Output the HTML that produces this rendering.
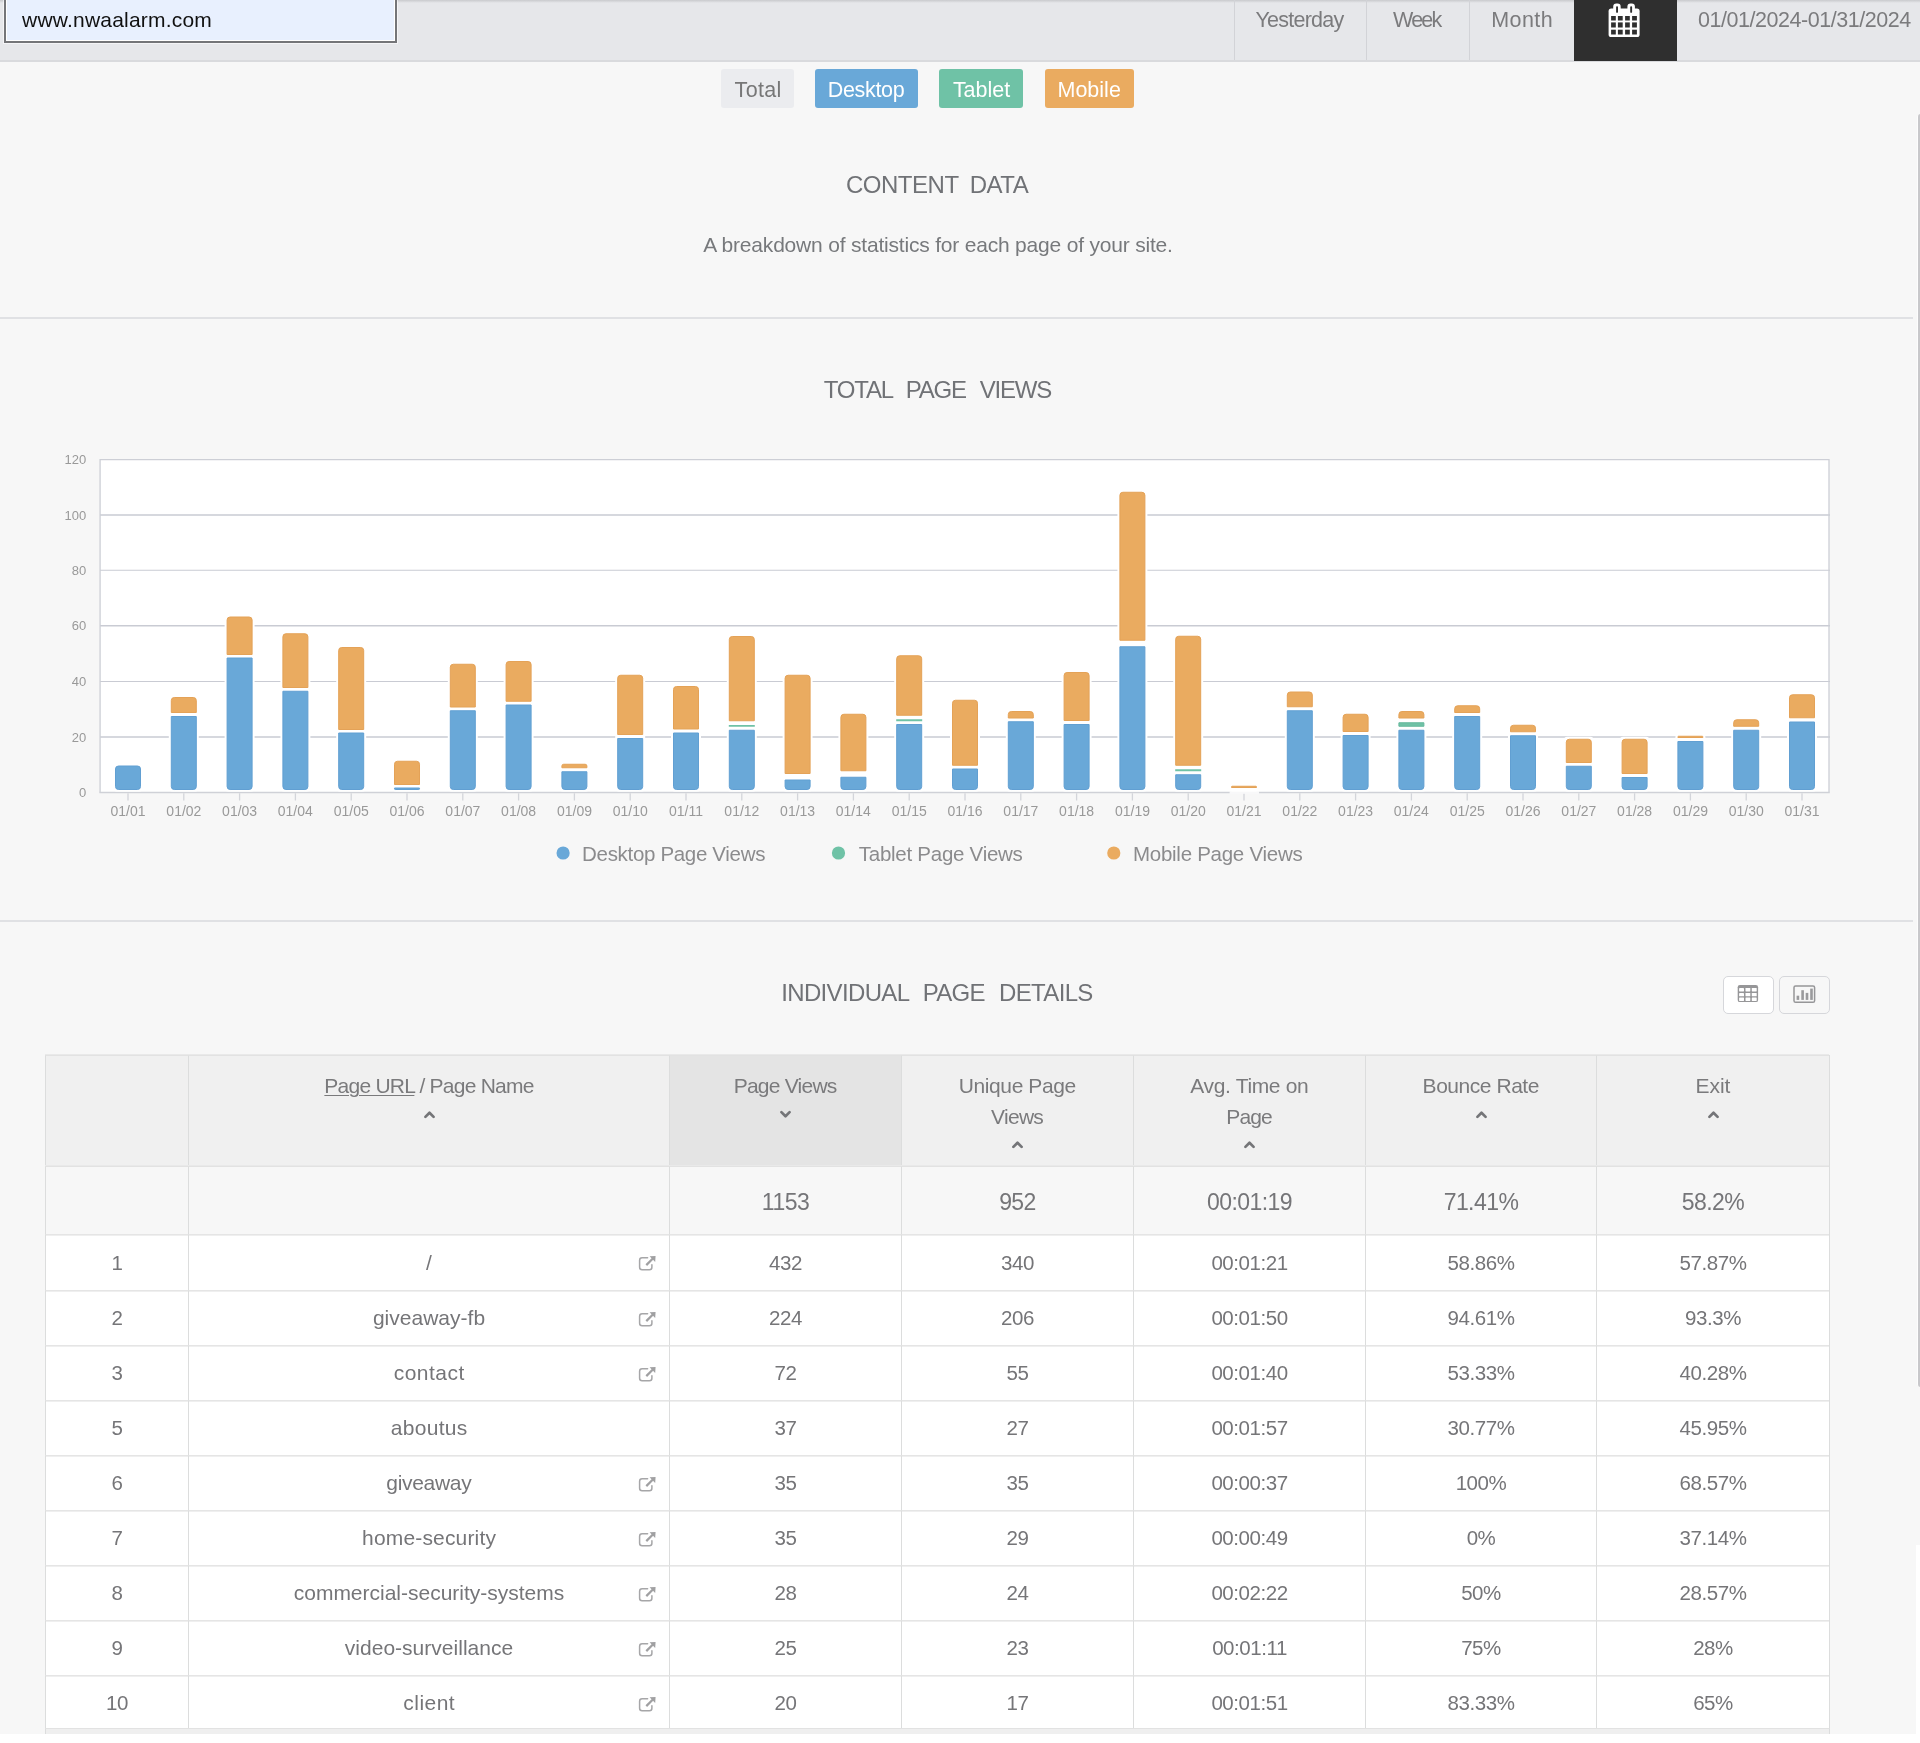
<!DOCTYPE html>
<html lang="en"><head><meta charset="utf-8"><title>Content Data</title>
<style>
*{box-sizing:border-box}
html,body{margin:0;padding:0}
body{width:1920px;height:1743px;background:#fff;font-family:"Liberation Sans",sans-serif;position:relative;overflow:hidden;color:#777}
.t{position:absolute;line-height:1;white-space:nowrap;margin:0;font-weight:400}
.page{position:absolute;left:0;top:0;width:1920px;height:1734px;background:#f7f7f7;will-change:transform}
.topbar{position:absolute;left:0;top:0;width:1920px;height:62px;background:#e6e7ea;border-bottom:2px solid #d9dadd}
.topbar:before{content:"";position:absolute;left:0;top:0;width:100%;height:3px;background:linear-gradient(#c9cacd,#e6e7ea)}
.site{position:absolute;left:4px;top:-3px;width:393px;height:46px;background:#e8f0fe;border:2px solid #747578;box-shadow:inset 0 0 0 1px #fff,0 0 0 1px rgba(255,255,255,.55)}
.nav{position:absolute;top:0;height:60px;border-left:1px solid #d2d3d7}
.nav.cal{background:#2f2f2f;border:0;height:61px}
.dev{position:absolute;top:69px;height:39px;border-radius:3px}
.hr{position:absolute;left:0;width:1913px;height:2px;background:#e0e1e4}
.sb{position:absolute;left:1917px;top:114px;width:3px;height:1273px;background:#c8c8cb;border-left:1px solid #fdfdfd;border-radius:3px 0 0 3px}
.vb{position:absolute;top:976px;width:51px;height:38px;border:1px solid #d6d7db;border-radius:5px}

.vb svg{position:absolute}
table.dt{position:absolute;left:45px;top:1055px;border-collapse:separate;border-spacing:0;table-layout:fixed;width:1785px;border-right:1px solid #dcdddd;color:#757578}
.dt th,.dt td{border-left:1px solid #dcdddd;border-top:1px solid #e2e2e2;padding:0;text-align:center;font-weight:400;position:relative;overflow:hidden;white-space:nowrap}
.dt th{background:#f0f0f0;vertical-align:top;font-size:21px;line-height:31px;padding-top:14px;height:111px;color:#7a7a7c}
.dt th.sorted{background:#e4e4e4}
.dt thead th,.dt thead td{box-shadow:0 -1px 0 #e9e9e9}
.dt tbody td{border-top-color:#e5e5e5;box-shadow:inset 0 1px 0 #efefef}
.dt th u{text-decoration-thickness:1.2px;text-underline-offset:2px}
.dt tr.tot td{background:#f7f7f7;height:68px;font-size:23px;line-height:26px;vertical-align:middle;letter-spacing:-.55px;padding:3px 0 0}
.dt tbody td{background:#fff;height:55px;font-size:20.5px;line-height:24px;vertical-align:middle;letter-spacing:-.45px;padding:0}
.dt tbody tr.r56 td{height:56px;padding:1px 0 0}
.dt tbody tr.r53 td{height:53px;padding:2px 0 0}
.dt tbody td.nm{letter-spacing:0;font-size:21px}
.dt .car{display:block;margin:0 auto;position:relative;top:9px}
.dt .two .car{top:7.5px}
.dt .lk{position:absolute;right:13px;top:50%;margin-top:-7.4px}
.dt tr.r53 .lk{margin-top:-6.4px}
.tfoot{position:absolute;left:45px;top:1728px;width:1785px;height:6px;background:#efefef;border-top:1px solid #e2e2e2;border-left:1px solid #dcdddd;border-right:1px solid #dcdddd}
</style></head>
<body>
<div class="page">
<header class="topbar">
<div class="site"><span class="t" style="left:16.12px;top:10.40px;font-size:21px;color:#111;letter-spacing:0.200px;">www.nwaalarm.com</span></div>
<nav>
<a class="nav" style="left:1234px;width:132px"><span class="t" style="left:20.38px;top:9.80px;font-size:21.5px;color:#7b7b7d;letter-spacing:-0.750px;">Yesterday</span></a>
<a class="nav" style="left:1366px;width:104px"><span class="t" style="left:26.00px;top:9.80px;font-size:21.5px;color:#7b7b7d;letter-spacing:-1.750px;">Week</span></a>
<a class="nav" style="left:1469px;width:105px"><span class="t" style="left:21.25px;top:9.80px;font-size:21.5px;color:#7b7b7d;letter-spacing:0.406px;">Month</span></a>
</nav>
<div class="nav cal" style="left:1574px;width:103px"></div>
<span class="t" style="left:1697.95px;top:9.80px;font-size:21.5px;color:#7b7b7d;letter-spacing:-0.450px;">01/01/2024-01/31/2024</span>
<svg style="position:absolute;left:1604px;top:0" width="40" height="42" viewBox="1604 0 40 42">
<rect x="1608.6" y="8.6" width="31" height="28.5" rx="2.6" fill="#fff"/>
<rect x="1613.2" y="3.6" width="7.5" height="11" rx="3.2" fill="#fff"/>
<rect x="1627.4" y="3.6" width="7.5" height="11" rx="3.2" fill="#fff"/>
<rect x="1616.1" y="6.2" width="1.9" height="6.6" rx=".9" fill="#2f2f2f"/>
<rect x="1630.2" y="6.2" width="1.9" height="6.6" rx=".9" fill="#2f2f2f"/>
<g fill="#2f2f2f"><rect x="1611.1" y="16.0" width="4.7" height="4.5"/><rect x="1617.9" y="16.0" width="4.8" height="4.5"/><rect x="1625.1" y="16.0" width="4.7" height="4.5"/><rect x="1632.1" y="16.0" width="4.8" height="4.5"/><rect x="1611.1" y="22.4" width="4.7" height="5.1"/><rect x="1617.9" y="22.4" width="4.8" height="5.1"/><rect x="1625.1" y="22.4" width="4.7" height="5.1"/><rect x="1632.1" y="22.4" width="4.8" height="5.1"/><rect x="1611.1" y="29.7" width="4.7" height="4.8"/><rect x="1617.9" y="29.7" width="4.8" height="4.8"/><rect x="1625.1" y="29.7" width="4.7" height="4.8"/><rect x="1632.1" y="29.7" width="4.8" height="4.8"/></g></svg>
</header>
<div class="dev" style="left:720.5px;width:73.25px;background:#ebecef"><span class="t" style="left:14.12px;top:10.60px;font-size:21.5px;color:#777;letter-spacing:0.344px;">Total</span></div>
<div class="dev" style="left:815px;width:102.75px;background:#69a8d8"><span class="t" style="left:12.75px;top:10.60px;font-size:21.5px;color:#fff;letter-spacing:-0.333px;">Desktop</span></div>
<div class="dev" style="left:939px;width:84.25px;background:#6fc2a6"><span class="t" style="left:13.88px;top:10.60px;font-size:21.5px;color:#fff;letter-spacing:-0.025px;">Tablet</span></div>
<div class="dev" style="left:1044.5px;width:89.75px;background:#eaab60"><span class="t" style="left:13.00px;top:10.60px;font-size:21.5px;color:#fff;">Mobile</span></div>
<h1 class="t" style="left:845.98px;top:173.30px;font-size:24px;color:#707276;letter-spacing:-0.477px;word-spacing:5.248px">CONTENT DATA</h1>
<p class="t" style="left:703.30px;top:234.40px;font-size:21px;color:#77797c;letter-spacing:-0.196px;">A breakdown of statistics for each page of your site.</p>
<div class="hr" style="top:317px"></div>
<h2 class="t" style="left:823.80px;top:378.00px;font-size:24px;color:#707276;letter-spacing:-1.221px;word-spacing:8.419px">TOTAL PAGE VIEWS</h2>
<div class="hr" style="top:919.5px"></div>
<h2 class="t" style="left:781.27px;top:981.00px;font-size:24px;color:#707276;letter-spacing:-0.662px;word-spacing:8.175px">INDIVIDUAL PAGE DETAILS</h2>
<div class="sb"></div>
<div style="position:absolute;left:1916px;top:1545px;width:4px;height:189px;background:#fff"></div>
<svg class="chart" style="position:absolute;left:0;top:440px" width="1920" height="440" viewBox="0 440 1920 440" font-family="Liberation Sans, sans-serif">
<rect x="100.1" y="459.6" width="1728.9" height="332.9" fill="#fff"/>
<line x1="100" x2="1830" y1="515.0" y2="515.0" stroke="#c9cbd3" stroke-width="1.5"/>
<line x1="100" x2="1830" y1="570.2" y2="570.2" stroke="#c9cbd3" stroke-width="1.1"/>
<line x1="100" x2="1830" y1="625.8" y2="625.8" stroke="#c9cbd3" stroke-width="1.5"/>
<line x1="100" x2="1830" y1="681.5" y2="681.5" stroke="#c9cbd3" stroke-width="1.1"/>
<line x1="100" x2="1830" y1="737.0" y2="737.0" stroke="#c9cbd3" stroke-width="1.5"/>
<path d="M100.1 792.5V459.6H1829V792.5" fill="none" stroke="#cdcfd6" stroke-width="1.3"/>
<line x1="99.4" x2="1829.7" y1="792.5" y2="792.5" stroke="#cfd1d7" stroke-width="1.4"/>
<path d="M128.00 793.2V800.6M183.80 793.2V800.6M239.60 793.2V800.6M295.40 793.2V800.6M351.20 793.2V800.6M407.00 793.2V800.6M462.80 793.2V800.6M518.60 793.2V800.6M574.40 793.2V800.6M630.20 793.2V800.6M686.00 793.2V800.6M741.80 793.2V800.6M797.60 793.2V800.6M853.40 793.2V800.6M909.20 793.2V800.6M965.00 793.2V800.6M1020.80 793.2V800.6M1076.60 793.2V800.6M1132.40 793.2V800.6M1188.20 793.2V800.6M1244.00 793.2V800.6M1299.80 793.2V800.6M1355.60 793.2V800.6M1411.40 793.2V800.6M1467.20 793.2V800.6M1523.00 793.2V800.6M1578.80 793.2V800.6M1634.60 793.2V800.6M1690.40 793.2V800.6M1746.20 793.2V800.6M1802.00 793.2V800.6" stroke="#d3d5da" stroke-width="1.3" fill="none"/>
<rect x="113.00" y="763.50" width="30.0" height="28.10" rx="3.5" fill="#fff"/>
<path d="M115.50 769.00Q115.50 766.00 118.50 766.00L137.50 766.00Q140.50 766.00 140.50 769.00L140.50 786.50Q140.50 789.50 137.50 789.50L118.50 789.50Q115.50 789.50 115.50 786.50Z" fill="#69a8d8" stroke="#619fd2" stroke-width="1"/>
<rect x="168.80" y="695.00" width="30.0" height="96.60" rx="3.5" fill="#fff"/>
<path d="M171.30 700.50Q171.30 697.50 174.30 697.50L193.30 697.50Q196.30 697.50 196.30 700.50L196.30 712.50L171.30 712.50Z" fill="#eaab60" stroke="#e4a257" stroke-width="1"/>
<path d="M171.30 716.50L171.30 716.50L196.30 716.50L196.30 786.50Q196.30 789.50 193.30 789.50L174.30 789.50Q171.30 789.50 171.30 786.50Z" fill="#69a8d8" stroke="#619fd2" stroke-width="1"/>
<rect x="224.60" y="614.50" width="30.0" height="177.10" rx="3.5" fill="#fff"/>
<path d="M227.10 620.00Q227.10 617.00 230.10 617.00L249.10 617.00Q252.10 617.00 252.10 620.00L252.10 654.50L227.10 654.50Z" fill="#eaab60" stroke="#e4a257" stroke-width="1"/>
<path d="M227.10 658.00L227.10 658.00L252.10 658.00L252.10 786.50Q252.10 789.50 249.10 789.50L230.10 789.50Q227.10 789.50 227.10 786.50Z" fill="#69a8d8" stroke="#619fd2" stroke-width="1"/>
<rect x="280.40" y="631.25" width="30.0" height="160.35" rx="3.5" fill="#fff"/>
<path d="M282.90 636.75Q282.90 633.75 285.90 633.75L304.90 633.75Q307.90 633.75 307.90 636.75L307.90 687.50L282.90 687.50Z" fill="#eaab60" stroke="#e4a257" stroke-width="1"/>
<path d="M282.90 691.25L282.90 691.25L307.90 691.25L307.90 786.50Q307.90 789.50 304.90 789.50L285.90 789.50Q282.90 789.50 282.90 786.50Z" fill="#69a8d8" stroke="#619fd2" stroke-width="1"/>
<rect x="336.20" y="645.00" width="30.0" height="146.60" rx="3.5" fill="#fff"/>
<path d="M338.70 650.50Q338.70 647.50 341.70 647.50L360.70 647.50Q363.70 647.50 363.70 650.50L363.70 729.50L338.70 729.50Z" fill="#eaab60" stroke="#e4a257" stroke-width="1"/>
<path d="M338.70 733.00L338.70 733.00L363.70 733.00L363.70 786.50Q363.70 789.50 360.70 789.50L341.70 789.50Q338.70 789.50 338.70 786.50Z" fill="#69a8d8" stroke="#619fd2" stroke-width="1"/>
<rect x="392.00" y="758.75" width="30.0" height="32.85" rx="3.5" fill="#fff"/>
<path d="M394.50 764.25Q394.50 761.25 397.50 761.25L416.50 761.25Q419.50 761.25 419.50 764.25L419.50 784.50L394.50 784.50Z" fill="#eaab60" stroke="#e4a257" stroke-width="1"/>
<path d="M394.50 788.00L394.50 788.00L419.50 788.00L419.50 788.75Q419.50 789.50 418.75 789.50L395.25 789.50Q394.50 789.50 394.50 788.75Z" fill="#69a8d8" stroke="#619fd2" stroke-width="1"/>
<rect x="447.80" y="661.75" width="30.0" height="129.85" rx="3.5" fill="#fff"/>
<path d="M450.30 667.25Q450.30 664.25 453.30 664.25L472.30 664.25Q475.30 664.25 475.30 667.25L475.30 707.00L450.30 707.00Z" fill="#eaab60" stroke="#e4a257" stroke-width="1"/>
<path d="M450.30 710.75L450.30 710.75L475.30 710.75L475.30 786.50Q475.30 789.50 472.30 789.50L453.30 789.50Q450.30 789.50 450.30 786.50Z" fill="#69a8d8" stroke="#619fd2" stroke-width="1"/>
<rect x="503.60" y="659.00" width="30.0" height="132.60" rx="3.5" fill="#fff"/>
<path d="M506.10 664.50Q506.10 661.50 509.10 661.50L528.10 661.50Q531.10 661.50 531.10 664.50L531.10 701.25L506.10 701.25Z" fill="#eaab60" stroke="#e4a257" stroke-width="1"/>
<path d="M506.10 705.00L506.10 705.00L531.10 705.00L531.10 786.50Q531.10 789.50 528.10 789.50L509.10 789.50Q506.10 789.50 506.10 786.50Z" fill="#69a8d8" stroke="#619fd2" stroke-width="1"/>
<rect x="559.40" y="761.75" width="30.0" height="29.85" rx="3.5" fill="#fff"/>
<path d="M561.90 766.00Q561.90 764.25 563.65 764.25L585.15 764.25Q586.90 764.25 586.90 766.00L586.90 767.75L561.90 767.75Z" fill="#eaab60" stroke="#e4a257" stroke-width="1"/>
<path d="M561.90 771.75L561.90 771.75L586.90 771.75L586.90 786.50Q586.90 789.50 583.90 789.50L564.90 789.50Q561.90 789.50 561.90 786.50Z" fill="#69a8d8" stroke="#619fd2" stroke-width="1"/>
<rect x="615.20" y="672.75" width="30.0" height="118.85" rx="3.5" fill="#fff"/>
<path d="M617.70 678.25Q617.70 675.25 620.70 675.25L639.70 675.25Q642.70 675.25 642.70 678.25L642.70 734.50L617.70 734.50Z" fill="#eaab60" stroke="#e4a257" stroke-width="1"/>
<path d="M617.70 738.50L617.70 738.50L642.70 738.50L642.70 786.50Q642.70 789.50 639.70 789.50L620.70 789.50Q617.70 789.50 617.70 786.50Z" fill="#69a8d8" stroke="#619fd2" stroke-width="1"/>
<rect x="671.00" y="684.00" width="30.0" height="107.60" rx="3.5" fill="#fff"/>
<path d="M673.50 689.50Q673.50 686.50 676.50 686.50L695.50 686.50Q698.50 686.50 698.50 689.50L698.50 729.00L673.50 729.00Z" fill="#eaab60" stroke="#e4a257" stroke-width="1"/>
<path d="M673.50 733.00L673.50 733.00L698.50 733.00L698.50 786.50Q698.50 789.50 695.50 789.50L676.50 789.50Q673.50 789.50 673.50 786.50Z" fill="#69a8d8" stroke="#619fd2" stroke-width="1"/>
<rect x="726.80" y="634.00" width="30.0" height="157.60" rx="3.5" fill="#fff"/>
<path d="M729.30 639.50Q729.30 636.50 732.30 636.50L751.30 636.50Q754.30 636.50 754.30 639.50L754.30 720.75L729.30 720.75Z" fill="#eaab60" stroke="#e4a257" stroke-width="1"/>
<path d="M728.80 725.00L728.80 725.00L754.80 725.00L754.80 726.75L728.80 726.75Z" fill="#6fc2a6"/>
<path d="M729.30 730.25L729.30 730.25L754.30 730.25L754.30 786.50Q754.30 789.50 751.30 789.50L732.30 789.50Q729.30 789.50 729.30 786.50Z" fill="#69a8d8" stroke="#619fd2" stroke-width="1"/>
<rect x="782.60" y="672.75" width="30.0" height="118.85" rx="3.5" fill="#fff"/>
<path d="M785.10 678.25Q785.10 675.25 788.10 675.25L807.10 675.25Q810.10 675.25 810.10 678.25L810.10 773.50L785.10 773.50Z" fill="#eaab60" stroke="#e4a257" stroke-width="1"/>
<path d="M785.10 780.00L785.10 780.00L810.10 780.00L810.10 786.50Q810.10 789.50 807.10 789.50L788.10 789.50Q785.10 789.50 785.10 786.50Z" fill="#69a8d8" stroke="#619fd2" stroke-width="1"/>
<rect x="838.40" y="711.75" width="30.0" height="79.85" rx="3.5" fill="#fff"/>
<path d="M840.90 717.25Q840.90 714.25 843.90 714.25L862.90 714.25Q865.90 714.25 865.90 717.25L865.90 770.75L840.90 770.75Z" fill="#eaab60" stroke="#e4a257" stroke-width="1"/>
<path d="M840.90 777.25L840.90 777.25L865.90 777.25L865.90 786.50Q865.90 789.50 862.90 789.50L843.90 789.50Q840.90 789.50 840.90 786.50Z" fill="#69a8d8" stroke="#619fd2" stroke-width="1"/>
<rect x="894.20" y="653.25" width="30.0" height="138.35" rx="3.5" fill="#fff"/>
<path d="M896.70 658.75Q896.70 655.75 899.70 655.75L918.70 655.75Q921.70 655.75 921.70 658.75L921.70 715.25L896.70 715.25Z" fill="#eaab60" stroke="#e4a257" stroke-width="1"/>
<path d="M896.20 719.25L896.20 719.25L922.20 719.25L922.20 721.25L896.20 721.25Z" fill="#6fc2a6"/>
<path d="M896.70 724.50L896.70 724.50L921.70 724.50L921.70 786.50Q921.70 789.50 918.70 789.50L899.70 789.50Q896.70 789.50 896.70 786.50Z" fill="#69a8d8" stroke="#619fd2" stroke-width="1"/>
<rect x="950.00" y="697.75" width="30.0" height="93.85" rx="3.5" fill="#fff"/>
<path d="M952.50 703.25Q952.50 700.25 955.50 700.25L974.50 700.25Q977.50 700.25 977.50 703.25L977.50 765.25L952.50 765.25Z" fill="#eaab60" stroke="#e4a257" stroke-width="1"/>
<path d="M952.50 769.00L952.50 769.00L977.50 769.00L977.50 786.50Q977.50 789.50 974.50 789.50L955.50 789.50Q952.50 789.50 952.50 786.50Z" fill="#69a8d8" stroke="#619fd2" stroke-width="1"/>
<rect x="1005.80" y="709.00" width="30.0" height="82.60" rx="3.5" fill="#fff"/>
<path d="M1008.30 714.50Q1008.30 711.50 1011.30 711.50L1030.30 711.50Q1033.30 711.50 1033.30 714.50L1033.30 718.00L1008.30 718.00Z" fill="#eaab60" stroke="#e4a257" stroke-width="1"/>
<path d="M1008.30 721.75L1008.30 721.75L1033.30 721.75L1033.30 786.50Q1033.30 789.50 1030.30 789.50L1011.30 789.50Q1008.30 789.50 1008.30 786.50Z" fill="#69a8d8" stroke="#619fd2" stroke-width="1"/>
<rect x="1061.60" y="670.00" width="30.0" height="121.60" rx="3.5" fill="#fff"/>
<path d="M1064.10 675.50Q1064.10 672.50 1067.10 672.50L1086.10 672.50Q1089.10 672.50 1089.10 675.50L1089.10 720.50L1064.10 720.50Z" fill="#eaab60" stroke="#e4a257" stroke-width="1"/>
<path d="M1064.10 724.50L1064.10 724.50L1089.10 724.50L1089.10 786.50Q1089.10 789.50 1086.10 789.50L1067.10 789.50Q1064.10 789.50 1064.10 786.50Z" fill="#69a8d8" stroke="#619fd2" stroke-width="1"/>
<rect x="1117.40" y="489.75" width="30.0" height="301.85" rx="3.5" fill="#fff"/>
<path d="M1119.90 495.25Q1119.90 492.25 1122.90 492.25L1141.90 492.25Q1144.90 492.25 1144.90 495.25L1144.90 640.25L1119.90 640.25Z" fill="#eaab60" stroke="#e4a257" stroke-width="1"/>
<path d="M1119.90 646.75L1119.90 646.75L1144.90 646.75L1144.90 786.50Q1144.90 789.50 1141.90 789.50L1122.90 789.50Q1119.90 789.50 1119.90 786.50Z" fill="#69a8d8" stroke="#619fd2" stroke-width="1"/>
<rect x="1173.20" y="633.75" width="30.0" height="157.85" rx="3.5" fill="#fff"/>
<path d="M1175.70 639.25Q1175.70 636.25 1178.70 636.25L1197.70 636.25Q1200.70 636.25 1200.70 639.25L1200.70 765.25L1175.70 765.25Z" fill="#eaab60" stroke="#e4a257" stroke-width="1"/>
<path d="M1175.20 769.25L1175.20 769.25L1201.20 769.25L1201.20 771.25L1175.20 771.25Z" fill="#6fc2a6"/>
<path d="M1175.70 774.75L1175.70 774.75L1200.70 774.75L1200.70 786.50Q1200.70 789.50 1197.70 789.50L1178.70 789.50Q1175.70 789.50 1175.70 786.50Z" fill="#69a8d8" stroke="#619fd2" stroke-width="1"/>
<rect x="1229.00" y="783.75" width="30.0" height="7.85" rx="3.5" fill="#fff"/>
<path d="M1231.50 786.88Q1231.50 786.25 1232.12 786.25L1255.88 786.25Q1256.50 786.25 1256.50 786.88L1256.50 787.50L1231.50 787.50Z" fill="#eaab60" stroke="#e4a257" stroke-width="1"/>
<rect x="1284.80" y="689.50" width="30.0" height="102.10" rx="3.5" fill="#fff"/>
<path d="M1287.30 695.00Q1287.30 692.00 1290.30 692.00L1309.30 692.00Q1312.30 692.00 1312.30 695.00L1312.30 706.75L1287.30 706.75Z" fill="#eaab60" stroke="#e4a257" stroke-width="1"/>
<path d="M1287.30 710.75L1287.30 710.75L1312.30 710.75L1312.30 786.50Q1312.30 789.50 1309.30 789.50L1290.30 789.50Q1287.30 789.50 1287.30 786.50Z" fill="#69a8d8" stroke="#619fd2" stroke-width="1"/>
<rect x="1340.60" y="711.75" width="30.0" height="79.85" rx="3.5" fill="#fff"/>
<path d="M1343.10 717.25Q1343.10 714.25 1346.10 714.25L1365.10 714.25Q1368.10 714.25 1368.10 717.25L1368.10 731.50L1343.10 731.50Z" fill="#eaab60" stroke="#e4a257" stroke-width="1"/>
<path d="M1343.10 735.50L1343.10 735.50L1368.10 735.50L1368.10 786.50Q1368.10 789.50 1365.10 789.50L1346.10 789.50Q1343.10 789.50 1343.10 786.50Z" fill="#69a8d8" stroke="#619fd2" stroke-width="1"/>
<rect x="1396.40" y="709.00" width="30.0" height="82.60" rx="3.5" fill="#fff"/>
<path d="M1398.90 714.50Q1398.90 711.50 1401.90 711.50L1420.90 711.50Q1423.90 711.50 1423.90 714.50L1423.90 718.00L1398.90 718.00Z" fill="#eaab60" stroke="#e4a257" stroke-width="1"/>
<path d="M1398.90 722.75L1398.90 722.75L1423.90 722.75L1423.90 726.25L1398.90 726.25Z" fill="#6fc2a6" stroke="#66b89c" stroke-width="1"/>
<path d="M1398.90 730.25L1398.90 730.25L1423.90 730.25L1423.90 786.50Q1423.90 789.50 1420.90 789.50L1401.90 789.50Q1398.90 789.50 1398.90 786.50Z" fill="#69a8d8" stroke="#619fd2" stroke-width="1"/>
<rect x="1452.20" y="703.25" width="30.0" height="88.35" rx="3.5" fill="#fff"/>
<path d="M1454.70 708.75Q1454.70 705.75 1457.70 705.75L1476.70 705.75Q1479.70 705.75 1479.70 708.75L1479.70 712.50L1454.70 712.50Z" fill="#eaab60" stroke="#e4a257" stroke-width="1"/>
<path d="M1454.70 716.50L1454.70 716.50L1479.70 716.50L1479.70 786.50Q1479.70 789.50 1476.70 789.50L1457.70 789.50Q1454.70 789.50 1454.70 786.50Z" fill="#69a8d8" stroke="#619fd2" stroke-width="1"/>
<rect x="1508.00" y="722.75" width="30.0" height="68.85" rx="3.5" fill="#fff"/>
<path d="M1510.50 728.25Q1510.50 725.25 1513.50 725.25L1532.50 725.25Q1535.50 725.25 1535.50 728.25L1535.50 731.75L1510.50 731.75Z" fill="#eaab60" stroke="#e4a257" stroke-width="1"/>
<path d="M1510.50 735.75L1510.50 735.75L1535.50 735.75L1535.50 786.50Q1535.50 789.50 1532.50 789.50L1513.50 789.50Q1510.50 789.50 1510.50 786.50Z" fill="#69a8d8" stroke="#619fd2" stroke-width="1"/>
<rect x="1563.80" y="736.75" width="30.0" height="54.85" rx="3.5" fill="#fff"/>
<path d="M1566.30 742.25Q1566.30 739.25 1569.30 739.25L1588.30 739.25Q1591.30 739.25 1591.30 742.25L1591.30 762.50L1566.30 762.50Z" fill="#eaab60" stroke="#e4a257" stroke-width="1"/>
<path d="M1566.30 766.25L1566.30 766.25L1591.30 766.25L1591.30 786.50Q1591.30 789.50 1588.30 789.50L1569.30 789.50Q1566.30 789.50 1566.30 786.50Z" fill="#69a8d8" stroke="#619fd2" stroke-width="1"/>
<rect x="1619.60" y="736.75" width="30.0" height="54.85" rx="3.5" fill="#fff"/>
<path d="M1622.10 742.25Q1622.10 739.25 1625.10 739.25L1644.10 739.25Q1647.10 739.25 1647.10 742.25L1647.10 773.50L1622.10 773.50Z" fill="#eaab60" stroke="#e4a257" stroke-width="1"/>
<path d="M1622.10 777.50L1622.10 777.50L1647.10 777.50L1647.10 786.50Q1647.10 789.50 1644.10 789.50L1625.10 789.50Q1622.10 789.50 1622.10 786.50Z" fill="#69a8d8" stroke="#619fd2" stroke-width="1"/>
<rect x="1675.40" y="733.75" width="30.0" height="57.85" rx="3.5" fill="#fff"/>
<path d="M1677.90 736.88Q1677.90 736.25 1678.52 736.25L1702.27 736.25Q1702.90 736.25 1702.90 736.88L1702.90 737.50L1677.90 737.50Z" fill="#eaab60" stroke="#e4a257" stroke-width="1"/>
<path d="M1677.90 741.50L1677.90 741.50L1702.90 741.50L1702.90 786.50Q1702.90 789.50 1699.90 789.50L1680.90 789.50Q1677.90 789.50 1677.90 786.50Z" fill="#69a8d8" stroke="#619fd2" stroke-width="1"/>
<rect x="1731.20" y="717.25" width="30.0" height="74.35" rx="3.5" fill="#fff"/>
<path d="M1733.70 722.75Q1733.70 719.75 1736.70 719.75L1755.70 719.75Q1758.70 719.75 1758.70 722.75L1758.70 726.25L1733.70 726.25Z" fill="#eaab60" stroke="#e4a257" stroke-width="1"/>
<path d="M1733.70 730.25L1733.70 730.25L1758.70 730.25L1758.70 786.50Q1758.70 789.50 1755.70 789.50L1736.70 789.50Q1733.70 789.50 1733.70 786.50Z" fill="#69a8d8" stroke="#619fd2" stroke-width="1"/>
<rect x="1787.00" y="692.25" width="30.0" height="99.35" rx="3.5" fill="#fff"/>
<path d="M1789.50 697.75Q1789.50 694.75 1792.50 694.75L1811.50 694.75Q1814.50 694.75 1814.50 697.75L1814.50 717.75L1789.50 717.75Z" fill="#eaab60" stroke="#e4a257" stroke-width="1"/>
<path d="M1789.50 722.00L1789.50 722.00L1814.50 722.00L1814.50 786.50Q1814.50 789.50 1811.50 789.50L1792.50 789.50Q1789.50 789.50 1789.50 786.50Z" fill="#69a8d8" stroke="#619fd2" stroke-width="1"/>
<rect x="1229.6" y="791.3" width="29.4" height="2.4" fill="#fff" opacity=".85"/>
<text x="64.45" y="464.20" font-size="13" fill="#999">120</text>
<text x="64.45" y="519.60" font-size="13" fill="#999">100</text>
<text x="71.70" y="574.80" font-size="13" fill="#999">80</text>
<text x="71.70" y="630.40" font-size="13" fill="#999">60</text>
<text x="71.70" y="686.10" font-size="13" fill="#999">40</text>
<text x="71.70" y="741.60" font-size="13" fill="#999">20</text>
<text x="78.95" y="797.10" font-size="13" fill="#999">0</text>
<text x="110.56" y="816.3" font-size="14" fill="#999">01/01</text>
<text x="166.36" y="816.3" font-size="14" fill="#999">01/02</text>
<text x="222.10" y="816.3" font-size="14" fill="#999">01/03</text>
<text x="277.77" y="816.3" font-size="14" fill="#999">01/04</text>
<text x="333.70" y="816.3" font-size="14" fill="#999">01/05</text>
<text x="389.50" y="816.3" font-size="14" fill="#999">01/06</text>
<text x="445.36" y="816.3" font-size="14" fill="#999">01/07</text>
<text x="501.10" y="816.3" font-size="14" fill="#999">01/08</text>
<text x="556.96" y="816.3" font-size="14" fill="#999">01/09</text>
<text x="612.70" y="816.3" font-size="14" fill="#999">01/10</text>
<text x="669.06" y="816.3" font-size="14" fill="#999">01/11</text>
<text x="724.36" y="816.3" font-size="14" fill="#999">01/12</text>
<text x="780.10" y="816.3" font-size="14" fill="#999">01/13</text>
<text x="835.77" y="816.3" font-size="14" fill="#999">01/14</text>
<text x="891.70" y="816.3" font-size="14" fill="#999">01/15</text>
<text x="947.50" y="816.3" font-size="14" fill="#999">01/16</text>
<text x="1003.36" y="816.3" font-size="14" fill="#999">01/17</text>
<text x="1059.10" y="816.3" font-size="14" fill="#999">01/18</text>
<text x="1114.96" y="816.3" font-size="14" fill="#999">01/19</text>
<text x="1170.70" y="816.3" font-size="14" fill="#999">01/20</text>
<text x="1226.56" y="816.3" font-size="14" fill="#999">01/21</text>
<text x="1282.36" y="816.3" font-size="14" fill="#999">01/22</text>
<text x="1338.10" y="816.3" font-size="14" fill="#999">01/23</text>
<text x="1393.77" y="816.3" font-size="14" fill="#999">01/24</text>
<text x="1449.70" y="816.3" font-size="14" fill="#999">01/25</text>
<text x="1505.50" y="816.3" font-size="14" fill="#999">01/26</text>
<text x="1561.36" y="816.3" font-size="14" fill="#999">01/27</text>
<text x="1617.10" y="816.3" font-size="14" fill="#999">01/28</text>
<text x="1672.96" y="816.3" font-size="14" fill="#999">01/29</text>
<text x="1728.70" y="816.3" font-size="14" fill="#999">01/30</text>
<text x="1784.56" y="816.3" font-size="14" fill="#999">01/31</text>
<circle cx="563.1" cy="853" r="6.6" fill="#69a8d8"/>
<text x="582.12" y="861.3" font-size="20.5" fill="#8b8b8d" letter-spacing="-0.324">Desktop Page Views</text>
<circle cx="838.5" cy="853" r="6.6" fill="#6fc2a6"/>
<text x="858.83" y="861.3" font-size="20.5" fill="#8b8b8d" letter-spacing="-0.266">Tablet Page Views</text>
<circle cx="1113.8" cy="853" r="6.6" fill="#eaab60"/>
<text x="1132.97" y="861.3" font-size="20.5" fill="#8b8b8d" letter-spacing="-0.266">Mobile Page Views</text>
</svg>
<div class="vb" style="left:1723px;background:#fff"><svg style="left:12px;top:7px" width="24" height="20" viewBox="0 0 24 20"><rect x="1.7" y="1" width="20.4" height="17.1" rx="2.2" fill="#969698"/><g fill="#fff"><rect x="3.1" y="4.1" width="4.9" height="3.3" rx=".4"/><rect x="9.5" y="4.1" width="4.8" height="3.3" rx=".4"/><rect x="15.8" y="4.1" width="4.9" height="3.3" rx=".4"/><rect x="3.1" y="9.0" width="4.9" height="3.3" rx=".4"/><rect x="9.5" y="9.0" width="4.8" height="3.3" rx=".4"/><rect x="15.8" y="9.0" width="4.9" height="3.3" rx=".4"/><rect x="3.1" y="13.6" width="4.9" height="3.3" rx=".4"/><rect x="9.5" y="13.6" width="4.8" height="3.3" rx=".4"/><rect x="15.8" y="13.6" width="4.9" height="3.3" rx=".4"/></g></svg></div>
<div class="vb" style="left:1779px;background:#f7f7f7"><svg style="left:12px;top:7px" width="26" height="21" viewBox="0 0 26 21"><rect x="2" y="1.9" width="20.6" height="16.4" rx="1.6" fill="none" stroke="#969698" stroke-width="1.5"/><g fill="#9a9a9c"><rect x="4.6" y="11.7" width="2.6" height="4.2"/><rect x="9.3" y="6.2" width="2.6" height="9.7"/><rect x="13.7" y="8.9" width="2.6" height="7"/><rect x="18.2" y="4.6" width="2.6" height="11.3"/></g></svg></div>
<table class="dt"><colgroup><col style="width:143px"><col style="width:481px"><col style="width:232px"><col style="width:232px"><col style="width:232px"><col style="width:231px"><col style="width:233px"></colgroup>
<thead><tr><th></th>
<th><span style="letter-spacing:-0.763px"><u>Page URL</u> / Page Name</span><svg class="car" width="13" height="9" viewBox="0 0 13 9"><path d="M2.4 6.9L6.5 2.8L10.6 6.9" fill="none" stroke="#747578" stroke-width="2.7" stroke-linecap="round" stroke-linejoin="round"/></svg></th>
<th class="sorted"><span style="letter-spacing:-0.769px;margin-right:0.769px">Page Views</span><svg class="car" width="13" height="9" viewBox="0 0 13 9"><path d="M2.4 2.1L6.5 6.2L10.6 2.1" fill="none" stroke="#747578" stroke-width="2.7" stroke-linecap="round" stroke-linejoin="round"/></svg></th>
<th class="two"><span style="letter-spacing:-0.400px;margin-right:0.400px">Unique Page</span><br><span style="letter-spacing:-0.719px;margin-right:0.719px">Views</span><svg class="car" width="13" height="9" viewBox="0 0 13 9"><path d="M2.4 6.9L6.5 2.8L10.6 6.9" fill="none" stroke="#747578" stroke-width="2.7" stroke-linecap="round" stroke-linejoin="round"/></svg></th>
<th class="two"><span style="letter-spacing:-0.352px;margin-right:0.352px">Avg. Time on</span><br><span style="letter-spacing:-0.900px;margin-right:0.900px">Page</span><svg class="car" width="13" height="9" viewBox="0 0 13 9"><path d="M2.4 6.9L6.5 2.8L10.6 6.9" fill="none" stroke="#747578" stroke-width="2.7" stroke-linecap="round" stroke-linejoin="round"/></svg></th>
<th><span style="letter-spacing:-0.458px;margin-right:0.458px">Bounce Rate</span><svg class="car" width="13" height="9" viewBox="0 0 13 9"><path d="M2.4 6.9L6.5 2.8L10.6 6.9" fill="none" stroke="#747578" stroke-width="2.7" stroke-linecap="round" stroke-linejoin="round"/></svg></th>
<th><span style="letter-spacing:-0.083px;margin-right:0.083px">Exit</span><svg class="car" width="13" height="9" viewBox="0 0 13 9"><path d="M2.4 6.9L6.5 2.8L10.6 6.9" fill="none" stroke="#747578" stroke-width="2.7" stroke-linecap="round" stroke-linejoin="round"/></svg></th></tr>
<tr class="tot"><td></td><td></td><td>1153</td><td>952</td><td>00:01:19</td><td>71.41%</td><td>58.2%</td></tr></thead><tbody>
<tr class="r56"><td>1</td><td class="nm">/<svg class="lk" width="18" height="16" viewBox="0 0 18 16"><path d="M9.6 2.7H4.1Q1.6 2.7 1.6 5.2V12.3Q1.6 14.8 4.1 14.8H11.4Q13.9 14.8 13.9 12.3V9.8" fill="none" stroke="#a6a6a8" stroke-width="1.5" stroke-linecap="round"/><path d="M8.3 10.1L15.6 2.8" stroke="#a0a0a2" stroke-width="2.2" fill="none"/><path d="M11.6 1.3L17.6 .9L17.2 6.9Z" fill="#a0a0a2"/></svg></td><td>432</td><td>340</td><td>00:01:21</td><td>58.86%</td><td>57.87%</td></tr>
<tr class=""><td>2</td><td class="nm"><span style="letter-spacing:0.013px;margin-right:-0.013px">giveaway-fb</span><svg class="lk" width="18" height="16" viewBox="0 0 18 16"><path d="M9.6 2.7H4.1Q1.6 2.7 1.6 5.2V12.3Q1.6 14.8 4.1 14.8H11.4Q13.9 14.8 13.9 12.3V9.8" fill="none" stroke="#a6a6a8" stroke-width="1.5" stroke-linecap="round"/><path d="M8.3 10.1L15.6 2.8" stroke="#a0a0a2" stroke-width="2.2" fill="none"/><path d="M11.6 1.3L17.6 .9L17.2 6.9Z" fill="#a0a0a2"/></svg></td><td>224</td><td>206</td><td>00:01:50</td><td>94.61%</td><td>93.3%</td></tr>
<tr class=""><td>3</td><td class="nm"><span style="letter-spacing:0.458px;margin-right:-0.458px">contact</span><svg class="lk" width="18" height="16" viewBox="0 0 18 16"><path d="M9.6 2.7H4.1Q1.6 2.7 1.6 5.2V12.3Q1.6 14.8 4.1 14.8H11.4Q13.9 14.8 13.9 12.3V9.8" fill="none" stroke="#a6a6a8" stroke-width="1.5" stroke-linecap="round"/><path d="M8.3 10.1L15.6 2.8" stroke="#a0a0a2" stroke-width="2.2" fill="none"/><path d="M11.6 1.3L17.6 .9L17.2 6.9Z" fill="#a0a0a2"/></svg></td><td>72</td><td>55</td><td>00:01:40</td><td>53.33%</td><td>40.28%</td></tr>
<tr class=""><td>5</td><td class="nm"><span style="letter-spacing:0.312px;margin-right:-0.312px">aboutus</span></td><td>37</td><td>27</td><td>00:01:57</td><td>30.77%</td><td>45.95%</td></tr>
<tr class=""><td>6</td><td class="nm"><span style="letter-spacing:-0.304px;margin-right:0.304px">giveaway</span><svg class="lk" width="18" height="16" viewBox="0 0 18 16"><path d="M9.6 2.7H4.1Q1.6 2.7 1.6 5.2V12.3Q1.6 14.8 4.1 14.8H11.4Q13.9 14.8 13.9 12.3V9.8" fill="none" stroke="#a6a6a8" stroke-width="1.5" stroke-linecap="round"/><path d="M8.3 10.1L15.6 2.8" stroke="#a0a0a2" stroke-width="2.2" fill="none"/><path d="M11.6 1.3L17.6 .9L17.2 6.9Z" fill="#a0a0a2"/></svg></td><td>35</td><td>35</td><td>00:00:37</td><td>100%</td><td>68.57%</td></tr>
<tr class=""><td>7</td><td class="nm"><span style="letter-spacing:0.167px;margin-right:-0.167px">home-security</span><svg class="lk" width="18" height="16" viewBox="0 0 18 16"><path d="M9.6 2.7H4.1Q1.6 2.7 1.6 5.2V12.3Q1.6 14.8 4.1 14.8H11.4Q13.9 14.8 13.9 12.3V9.8" fill="none" stroke="#a6a6a8" stroke-width="1.5" stroke-linecap="round"/><path d="M8.3 10.1L15.6 2.8" stroke="#a0a0a2" stroke-width="2.2" fill="none"/><path d="M11.6 1.3L17.6 .9L17.2 6.9Z" fill="#a0a0a2"/></svg></td><td>35</td><td>29</td><td>00:00:49</td><td>0%</td><td>37.14%</td></tr>
<tr class=""><td>8</td><td class="nm"><span style="letter-spacing:-0.005px;margin-right:0.005px">commercial-security-systems</span><svg class="lk" width="18" height="16" viewBox="0 0 18 16"><path d="M9.6 2.7H4.1Q1.6 2.7 1.6 5.2V12.3Q1.6 14.8 4.1 14.8H11.4Q13.9 14.8 13.9 12.3V9.8" fill="none" stroke="#a6a6a8" stroke-width="1.5" stroke-linecap="round"/><path d="M8.3 10.1L15.6 2.8" stroke="#a0a0a2" stroke-width="2.2" fill="none"/><path d="M11.6 1.3L17.6 .9L17.2 6.9Z" fill="#a0a0a2"/></svg></td><td>28</td><td>24</td><td>00:02:22</td><td>50%</td><td>28.57%</td></tr>
<tr class=""><td>9</td><td class="nm"><span style="letter-spacing:0.022px;margin-right:-0.022px">video-surveillance</span><svg class="lk" width="18" height="16" viewBox="0 0 18 16"><path d="M9.6 2.7H4.1Q1.6 2.7 1.6 5.2V12.3Q1.6 14.8 4.1 14.8H11.4Q13.9 14.8 13.9 12.3V9.8" fill="none" stroke="#a6a6a8" stroke-width="1.5" stroke-linecap="round"/><path d="M8.3 10.1L15.6 2.8" stroke="#a0a0a2" stroke-width="2.2" fill="none"/><path d="M11.6 1.3L17.6 .9L17.2 6.9Z" fill="#a0a0a2"/></svg></td><td>25</td><td>23</td><td>00:01:11</td><td>75%</td><td>28%</td></tr>
<tr class="r53"><td>10</td><td class="nm"><span style="letter-spacing:0.475px;margin-right:-0.475px">client</span><svg class="lk" width="18" height="16" viewBox="0 0 18 16"><path d="M9.6 2.7H4.1Q1.6 2.7 1.6 5.2V12.3Q1.6 14.8 4.1 14.8H11.4Q13.9 14.8 13.9 12.3V9.8" fill="none" stroke="#a6a6a8" stroke-width="1.5" stroke-linecap="round"/><path d="M8.3 10.1L15.6 2.8" stroke="#a0a0a2" stroke-width="2.2" fill="none"/><path d="M11.6 1.3L17.6 .9L17.2 6.9Z" fill="#a0a0a2"/></svg></td><td>20</td><td>17</td><td>00:01:51</td><td>83.33%</td><td>65%</td></tr>
</tbody></table><div class="tfoot"></div>
</div>
</body></html>
